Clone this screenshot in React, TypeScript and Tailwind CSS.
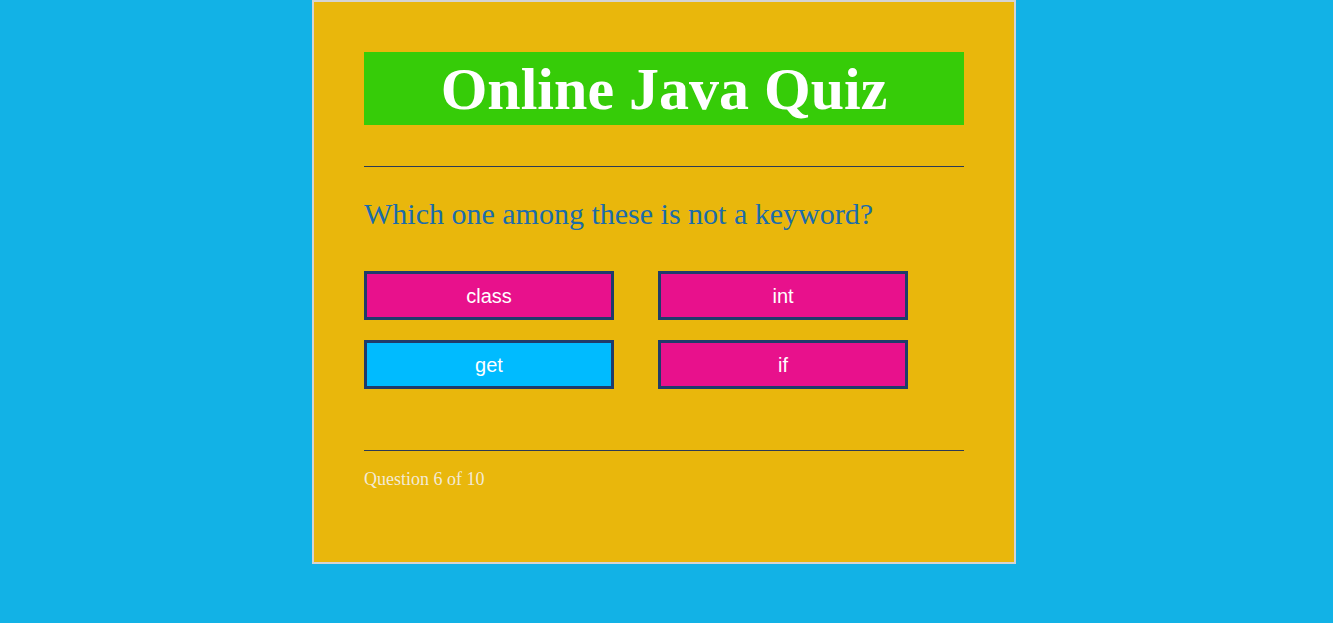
import React from 'react';

const choices = [
  { label: 'class', selected: false },
  { label: 'int', selected: false },
  { label: 'get', selected: true },
  { label: 'if', selected: false },
];

export default function App() {
  return (
    <div className="min-h-[623px] w-full bg-[#12b2e6] pl-[312px]">
      <div className="w-[704px] h-[564px] border-2 border-[#d4d4d4] bg-[#e9b70c] px-[50px] pt-[50px] font-['Liberation_Serif',serif]">
        <div className="h-[73px] bg-[#36cc08] flex items-center justify-center">
          <h1 className="text-[60px] font-bold leading-none text-white">Online Java Quiz</h1>
        </div>

        <hr className="mt-[41px] border-t border-[#2b3a55]" />

        <p className="mt-[29px] text-[30px] leading-[36px] text-[#1b6cab]">
          Which one among these is not a keyword?
        </p>

        <div className="mt-[39px] grid grid-cols-[250px_250px] gap-x-[44px] gap-y-[20px]">
          {choices.map((c) => (
            <button
              key={c.label}
              className={`h-[49px] border-[3px] border-[#1f3b6b] text-[20px] text-white font-['Liberation_Sans',sans-serif] ${
                c.selected ? 'bg-[#00bbff]' : 'bg-[#e8118c]'
              }`}
            >
              {c.label}
            </button>
          ))}
        </div>

        <hr className="mt-[61px] border-t border-[#2b3a55]" />

        <p className="mt-[16px] text-[18px] leading-[24px] text-[#f3ead6]">Question 6 of 10</p>
      </div>
    </div>
  );
}
